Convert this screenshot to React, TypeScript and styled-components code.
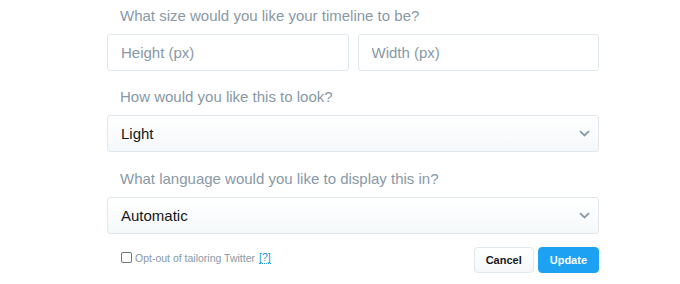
import styled, {createGlobalStyle} from "styled-components";

const GlobalStyle = createGlobalStyle`
  html, body {
    margin: 0;
    padding: 0;
    background: #ffffff;
  }
  body {
    font-family: "Liberation Sans", Arial, sans-serif;
  }
`

const Form = styled.form`
  width: 492px;
  margin-left: 107px;
  padding-top: 6px;
`

const Question = styled.div`
  font-size: 15px;
  line-height: 20px;
  color: #8899a6;
  padding-left: 13px;
  margin-bottom: 8px;
`

const Section = styled.div<{ $tight?: boolean }>`
  margin-bottom: ${p => (p.$tight ? "16px" : "17px")};
`

const InputRow = styled.div`
  display: flex;
  gap: 9px;
`

const TextInput = styled.input`
  flex: 1;
  min-width: 0;
  height: 37px;
  box-sizing: border-box;
  border: 1px solid #e1e8ed;
  border-radius: 3px;
  padding: 0 13px;
  font-family: "Liberation Sans", Arial, sans-serif;
  font-size: 15px;
  color: #14171a;
  background: #ffffff;
  outline: none;

  &::placeholder {
    color: #8899a6;
  }
`

const SelectBox = styled.div`
  height: 37px;
  box-sizing: border-box;
  border: 1px solid #e1e8ed;
  border-radius: 3px;
  background: linear-gradient(#ffffff, #f5f8fa);
  display: flex;
  align-items: center;
  padding: 0 8px 0 13px;
  font-size: 15px;
  color: #14171a;
`

const SelectText = styled.span`
  flex: 1;
`

const Footer = styled.div`
  display: flex;
  align-items: center;
  justify-content: space-between;
  margin-top: -4px;
`

const OptOut = styled.label`
  display: flex;
  align-items: center;
  gap: 2px;
  padding-left: 14px;
  margin-bottom: 5px;
  font-size: 10.5px;
  color: #8899a6;
`

const Box = styled.span`
  width: 11px;
  height: 11px;
  box-sizing: border-box;
  border: 1px solid #66757f;
  border-radius: 2px;
  background: #ffffff;
  margin-right: 1px;
`

const HelpLink = styled.a`
  color: #1b95e0;
  text-decoration: none;
  border-bottom: 1px dotted #1b95e0;
  line-height: 11px;
  margin-left: 2px;
`

const Buttons = styled.div`
  display: flex;
  gap: 4px;
`

const Button = styled.button<{ $primary?: boolean }>`
  height: 26px;
  box-sizing: border-box;
  padding: 0 11px;
  border-radius: 4px;
  font-family: "Liberation Sans", Arial, sans-serif;
  font-size: 11px;
  font-weight: bold;
  cursor: pointer;
  border: 1px solid ${p => (p.$primary ? "#1da1f2" : "#e1e8ed")};
  background: ${p => (p.$primary ? "#1da1f2" : "linear-gradient(#ffffff, #f5f8fa)")};
  color: ${p => (p.$primary ? "#ffffff" : "#14171a")};
`

const Chevron = () => (
    <svg width="11" height="7" viewBox="0 0 11 7" fill="none">
        <path d="M1 1.2 L5.5 5.4 L10 1.2" stroke="#8899a6" strokeWidth="1.8"/>
    </svg>
)

const Select = ({value}: { value: string }) => (
    <SelectBox>
        <SelectText>{value}</SelectText>
        <Chevron/>
    </SelectBox>
)

const App = () => {
    return (
        <>
            <GlobalStyle/>
            <Form onSubmit={e => e.preventDefault()}>
                <Section $tight>
                    <Question>What size would you like your timeline to be?</Question>
                    <InputRow>
                        <TextInput placeholder="Height (px)"/>
                        <TextInput placeholder="Width (px)"/>
                    </InputRow>
                </Section>
                <Section>
                    <Question>How would you like this to look?</Question>
                    <Select value="Light"/>
                </Section>
                <Section>
                    <Question>What language would you like to display this in?</Question>
                    <Select value="Automatic"/>
                </Section>
                <Footer>
                    <OptOut>
                        <Box/>
                        Opt-out of tailoring Twitter
                        <HelpLink href="#">[?]</HelpLink>
                    </OptOut>
                    <Buttons>
                        <Button type="button">Cancel</Button>
                        <Button type="button" $primary>Update</Button>
                    </Buttons>
                </Footer>
            </Form>
        </>
    )
}

export default App
